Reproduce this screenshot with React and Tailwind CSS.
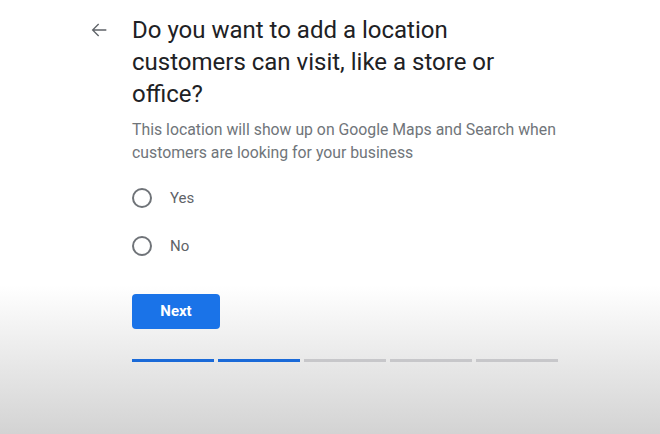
export default function App() {
  const steps = [true, true, false, false, false]

  return (
    <div
      className="flex h-[434px] w-[660px] bg-[linear-gradient(to_bottom,#ffffff_0px,#ffffff_285px,#d3d3d3_434px)] pl-[88px] pt-[14px]"
      style={{ fontFamily: 'Roboto, "Liberation Sans", sans-serif' }}
    >
      <div className="flex h-[32px] w-[44px] shrink-0 items-center">
        <svg width="22" height="22" viewBox="0 0 24 24" className="fill-[#5f6368]">
          <path d="M20 11.25H6.9l5.25-5.25L11.1 4.95 4.05 12l7.05 7.05 1.05-1.05-5.25-5.25H20z" />
        </svg>
      </div>

      <div className="flex w-[440px] flex-col">
        <h1 className="w-[372px] text-[24px] font-normal leading-[32px] text-[#202124]">
          Do you want to add a location customers can visit, like a store or office?
        </h1>
        <p className="mt-[8px] text-[15.8px] leading-[23px] text-[#70757a]">
          This location will show up on Google Maps and Search when customers are looking for your business
        </p>

        <div className="mt-[10px] flex flex-col">
          {['Yes', 'No'].map((label) => (
            <label key={label} className="flex h-[48px] items-center">
              <span className="h-[20px] w-[20px] rounded-full border-2 border-[#6f7378]" />
              <span className="ml-[18px] text-[15px] text-[#5f6368]">{label}</span>
            </label>
          ))}
        </div>

        <button
          type="button"
          className="mt-[24px] h-[35px] w-[88px] rounded-[4px] bg-[#1a73e8] text-[15px] font-bold text-white"
        >
          Next
        </button>

        <div className="mt-[30px] flex w-[426px] gap-[4px]">
          {steps.map((done, i) => (
            <div
              key={i}
              className={`h-[3px] flex-1 ${done ? 'bg-[#1a6ad8]' : 'bg-[#c7c7ca]'}`}
            />
          ))}
        </div>
      </div>
    </div>
  )
}
